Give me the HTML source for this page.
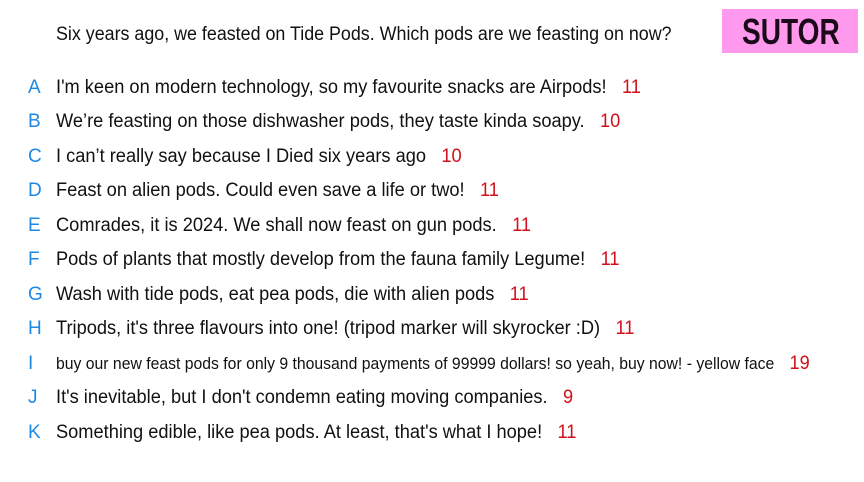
<!DOCTYPE html>
<html><head><meta charset="utf-8"><style>
body{margin:0;width:864px;height:482px;background:#fff;overflow:hidden;position:relative;font-family:"Liberation Sans",sans-serif;color:#111;}
.q{position:absolute;left:56px;top:24px;font-size:19px;white-space:nowrap;transform:scaleX(0.94);transform-origin:left;}
.logo{position:absolute;left:722px;top:9px;width:136px;height:44px;background:#ff99ee;}
.logo span{position:absolute;left:20px;top:1px;line-height:44px;font-size:36px;font-weight:bold;color:#1a0a1a;transform:scaleX(0.78);transform-origin:left;}
.r{position:absolute;left:0;height:30px;line-height:30px;font-size:19px;white-space:nowrap;}
.l{position:absolute;left:28px;color:#1e88e5;}
.t{position:absolute;left:56px;transform:scaleX(0.96);transform-origin:left;}
.n{color:#d0101a;margin-left:16px;}
</style></head><body>
<div class="q">Six years ago, we feasted on Tide Pods. Which pods are we feasting on now?</div>
<div class="logo"><span>SUTOR</span></div>
<div class="r" style="top:73px"><span class="l">A</span><span class="t">I'm keen on modern technology, so my favourite snacks are Airpods!<span class="n">11</span></span></div>
<div class="r" style="top:107px"><span class="l">B</span><span class="t">We’re feasting on those dishwasher pods, they taste kinda soapy.<span class="n">10</span></span></div>
<div class="r" style="top:142px"><span class="l">C</span><span class="t">I can’t really say because I Died six years ago<span class="n">10</span></span></div>
<div class="r" style="top:176px"><span class="l">D</span><span class="t">Feast on alien pods. Could even save a life or two!<span class="n">11</span></span></div>
<div class="r" style="top:211px"><span class="l">E</span><span class="t">Comrades, it is 2024. We shall now feast on gun pods.<span class="n">11</span></span></div>
<div class="r" style="top:245px"><span class="l">F</span><span class="t">Pods of plants that mostly develop from the fauna family Legume!<span class="n">11</span></span></div>
<div class="r" style="top:280px"><span class="l">G</span><span class="t">Wash with tide pods, eat pea pods, die with alien pods<span class="n">11</span></span></div>
<div class="r" style="top:314px"><span class="l">H</span><span class="t">Tripods, it's three flavours into one! (tripod marker will skyrocker :D)<span class="n">11</span></span></div>
<div class="r" style="top:349px"><span class="l">I</span><span class="t" style="font-size:16.5px;transform:scaleX(0.955)">buy our new feast pods for only 9 thousand payments of 99999 dollars! so yeah, buy now! - yellow face<span class="n" style="font-size:19px">19</span></span></div>
<div class="r" style="top:383px"><span class="l">J</span><span class="t">It's inevitable, but I don't condemn eating moving companies.<span class="n">9</span></span></div>
<div class="r" style="top:418px"><span class="l">K</span><span class="t">Something edible, like pea pods. At least, that's what I hope!<span class="n">11</span></span></div>
</body></html>
